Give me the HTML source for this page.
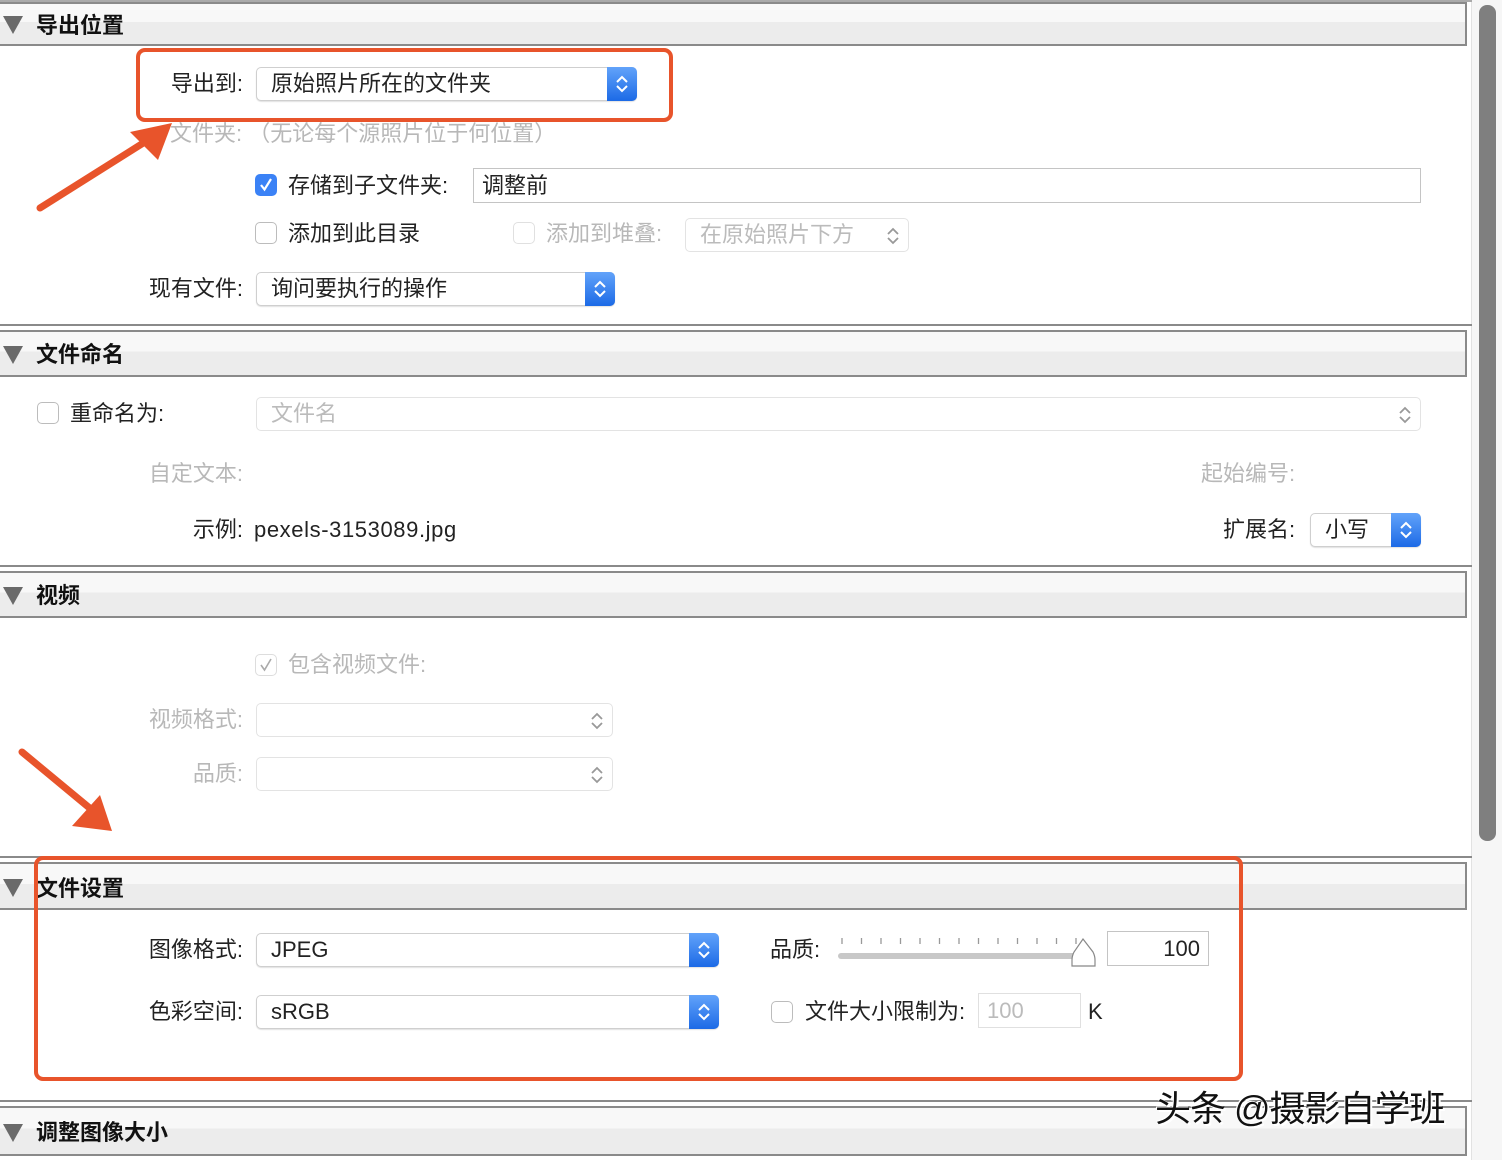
<!DOCTYPE html>
<html><head><meta charset="utf-8"><style>
*{margin:0;padding:0;box-sizing:border-box}
body{width:1502px;height:1160px;background:#fff;position:relative;overflow:hidden;font-family:"Liberation Sans","Noto Sans CJK SC",sans-serif;color:#222;font-size:22px}
.a{position:absolute}
.div{position:absolute;left:0;width:1472px;height:2px;background:#8a8a8a}
.hd{position:absolute;left:0;width:1467px;border:2px solid #8a8a8a;border-left:none;background:linear-gradient(#f8f8f8 0,#f8f8f8 45%,#ececec 45%,#ececec 100%)}
.hd .tri{position:absolute;left:3px;width:0;height:0;border-left:10px solid transparent;border-right:10px solid transparent;border-top:18px solid #6a6a6a}
.hd .t{position:absolute;left:36px;font-weight:bold;font-size:22px;color:#111}
.l{position:absolute;line-height:26px;height:26px;white-space:nowrap}
.r{text-align:right;width:200px}
.g{color:#b8b8b8}
.pop{position:absolute;height:34px;border:1px solid #cfcfcf;border-radius:5px;background:#fff;box-shadow:0 1px 1px rgba(0,0,0,.12);line-height:32px;padding-left:14px;white-space:nowrap}
.pop .b{position:absolute;right:-1px;top:-1px;bottom:-1px;width:30px;border-radius:0 5px 5px 0;background:linear-gradient(#62a3fa,#1c6ae6)}
.pop .b svg,.pop .c{position:absolute;right:6px;top:7px}
.dis{border-color:#e3e3e3;color:#bbb;box-shadow:none}
.cb{position:absolute;width:22px;height:22px;border:1px solid #bcbcbc;border-radius:5px;background:#fff}
.cb.on{background:#3b82f6;border-color:#3b82f6}
.tf{position:absolute;border:1px solid #c4c4c4;background:#fff;height:35px;line-height:33px;padding:0 8px;white-space:nowrap}
.red{position:absolute;border:4px solid #e8542b;border-radius:9px}
</style></head><body>

<div class="a" style="left:1471px;top:0;width:31px;height:1160px;background:#f6f6f6;border-left:1px solid #e2e2e2"></div>
<div class="a" style="left:1479px;top:5px;width:17px;height:836px;background:#7f7f7f;border-radius:8px"></div>

<div class="div" style="top:0;height:2px;background:#aaa"></div>
<div class="hd" style="top:2px;height:44px"><div class="tri" style="top:12px"></div><div class="t" style="top:4px">导出位置</div></div>

<div class="l r" style="left:43px;top:71px">导出到:</div>
<div class="pop" style="left:256px;top:67px;width:381px">原始照片所在的文件夹<div class="b"><svg width="18" height="20" viewBox="0 0 18 20"><path d="M4 8 9 3 14 8M4 12 9 17 14 12" fill="none" stroke="#fff" stroke-width="2"/></svg></div></div>
<div class="l g" style="left:170px;top:121px">文件夹: （无论每个源照片位于何位置）</div>

<div class="cb on" style="left:255px;top:174px"><svg width="22" height="22" viewBox="0 0 22 22" style="position:absolute;left:-1px;top:-1px"><path d="M6 11 9.5 15.5 16 5" fill="none" stroke="#fff" stroke-width="2.2"/></svg></div>
<div class="l" style="left:288px;top:173px">存储到子文件夹:</div>
<div class="tf" style="left:473px;top:168px;width:948px">调整前</div>

<div class="cb" style="left:255px;top:222px"></div>
<div class="l" style="left:288px;top:221px">添加到此目录</div>
<div class="cb" style="left:513px;top:222px;border-color:#e0e0e0"></div>
<div class="l g" style="left:546px;top:221px">添加到堆叠:</div>
<div class="pop dis" style="left:685px;top:218px;width:224px">在原始照片下方<svg class="c" width="18" height="20" viewBox="0 0 18 20"><path d="M4 8 9 3 14 8M4 12 9 17 14 12" fill="none" stroke="#999" stroke-width="1.8"/></svg></div>

<div class="l r" style="left:43px;top:276px">现有文件:</div>
<div class="pop" style="left:256px;top:272px;width:359px">询问要执行的操作<div class="b"><svg width="18" height="20" viewBox="0 0 18 20"><path d="M4 8 9 3 14 8M4 12 9 17 14 12" fill="none" stroke="#fff" stroke-width="2"/></svg></div></div>

<div class="div" style="top:324px"></div>
<div class="hd" style="top:330px;height:47px"><div class="tri" style="top:14px"></div><div class="t" style="top:5px">文件命名</div></div>
<div class="cb" style="left:37px;top:402px"></div>
<div class="l" style="left:70px;top:401px">重命名为:</div>
<div class="pop dis" style="left:256px;top:397px;width:1165px">文件名<svg class="c" width="18" height="20" viewBox="0 0 18 20"><path d="M4 8 9 3 14 8M4 12 9 17 14 12" fill="none" stroke="#999" stroke-width="1.8"/></svg></div>
<div class="l r g" style="left:43px;top:461px">自定文本:</div>
<div class="l g" style="left:1201px;top:461px">起始编号:</div>
<div class="l r" style="left:43px;top:517px">示例:</div>
<div class="l" style="left:254px;top:517px;letter-spacing:0.6px">pexels-3153089.jpg</div>
<div class="l" style="left:1223px;top:517px">扩展名:</div>
<div class="pop" style="left:1310px;top:513px;width:111px">小写<div class="b"><svg width="18" height="20" viewBox="0 0 18 20"><path d="M4 8 9 3 14 8M4 12 9 17 14 12" fill="none" stroke="#fff" stroke-width="2"/></svg></div></div>

<div class="div" style="top:565px"></div>
<div class="hd" style="top:571px;height:47px"><div class="tri" style="top:14px"></div><div class="t" style="top:5px">视频</div></div>
<div class="cb" style="left:255px;top:654px;border-color:#ddd"><svg width="22" height="22" viewBox="0 0 22 22" style="position:absolute;left:-1px;top:-1px"><path d="M6 11 9.5 16 16 5" fill="none" stroke="#aaa" stroke-width="1.6"/></svg></div>
<div class="l g" style="left:288px;top:652px">包含视频文件:</div>
<div class="l r g" style="left:43px;top:707px">视频格式:</div>
<div class="pop dis" style="left:256px;top:703px;width:357px"><svg class="c" width="18" height="20" viewBox="0 0 18 20"><path d="M4 8 9 3 14 8M4 12 9 17 14 12" fill="none" stroke="#999" stroke-width="1.8"/></svg></div>
<div class="l r g" style="left:43px;top:761px">品质:</div>
<div class="pop dis" style="left:256px;top:757px;width:357px"><svg class="c" width="18" height="20" viewBox="0 0 18 20"><path d="M4 8 9 3 14 8M4 12 9 17 14 12" fill="none" stroke="#999" stroke-width="1.8"/></svg></div>

<div class="div" style="top:856px"></div>
<div class="hd" style="top:862px;height:48px"><div class="tri" style="top:15px"></div><div class="t" style="top:7px">文件设置</div></div>
<div class="l r" style="left:43px;top:937px">图像格式:</div>
<div class="pop" style="left:256px;top:933px;width:463px">JPEG<div class="b"><svg width="18" height="20" viewBox="0 0 18 20"><path d="M4 8 9 3 14 8M4 12 9 17 14 12" fill="none" stroke="#fff" stroke-width="2"/></svg></div></div>
<div class="l r" style="left:43px;top:999px">色彩空间:</div>
<div class="pop" style="left:256px;top:995px;width:463px">sRGB<div class="b"><svg width="18" height="20" viewBox="0 0 18 20"><path d="M4 8 9 3 14 8M4 12 9 17 14 12" fill="none" stroke="#fff" stroke-width="2"/></svg></div></div>

<div class="l" style="left:770px;top:937px">品质:</div>
<svg class="a" style="left:836px;top:934px" width="264" height="36" viewBox="0 0 264 36">
<g stroke="#999" stroke-width="1.3">
<path d="M6 4v6M25.5 4v6M45 4v6M64.5 4v6M84 4v6M103.5 4v6M123 4v6M142.5 4v6M162 4v6M181.5 4v6M201 4v6M220.5 4v6M240 4v6"/></g>
<rect x="2" y="19" width="238" height="6" rx="3" fill="#c8c8c8"/>
<path d="M247 5 L257 18 Q259 22 259 26 V32 H236 V26 Q236 22 238 18 Z" fill="#fff" stroke="#888" stroke-width="1.2"/>
</svg>
<div class="tf" style="left:1107px;top:931px;width:102px;text-align:right">100</div>
<div class="cb" style="left:771px;top:1001px"></div>
<div class="l" style="left:805px;top:999px">文件大小限制为:</div>
<div class="tf" style="left:978px;top:993px;width:103px;color:#bbb;border-color:#e0e0e0">100</div>
<div class="l" style="left:1088px;top:999px">K</div>

<div class="div" style="top:1100px"></div>
<div class="hd" style="top:1106px;height:50px"><div class="tri" style="top:16px"></div><div class="t" style="top:7px">调整图像大小</div></div>
<div class="l" style="left:1155px;top:1088px;font-size:36px;line-height:42px;height:42px;color:#111;letter-spacing:-1px;text-shadow:2px 2px 0 #fff,-1px -1px 0 #fff">头条 @摄影自学班</div>

<div class="red" style="left:136px;top:48px;width:537px;height:74px"></div>
<div class="red" style="left:34px;top:856px;width:1209px;height:225px"></div>
<svg class="a" style="left:0;top:0" width="300" height="900" viewBox="0 0 300 900">
<path d="M40 208 L148 140" stroke="#e8542b" stroke-width="7" stroke-linecap="round"/>
<path d="M172 123 L130 132 L158 160 Z" fill="#e8542b"/>
<path d="M22 752 L92 810" stroke="#e8542b" stroke-width="7" stroke-linecap="round"/>
<path d="M112 831 L72 826 L100 795 Z" fill="#e8542b"/>
</svg>
</body></html>
